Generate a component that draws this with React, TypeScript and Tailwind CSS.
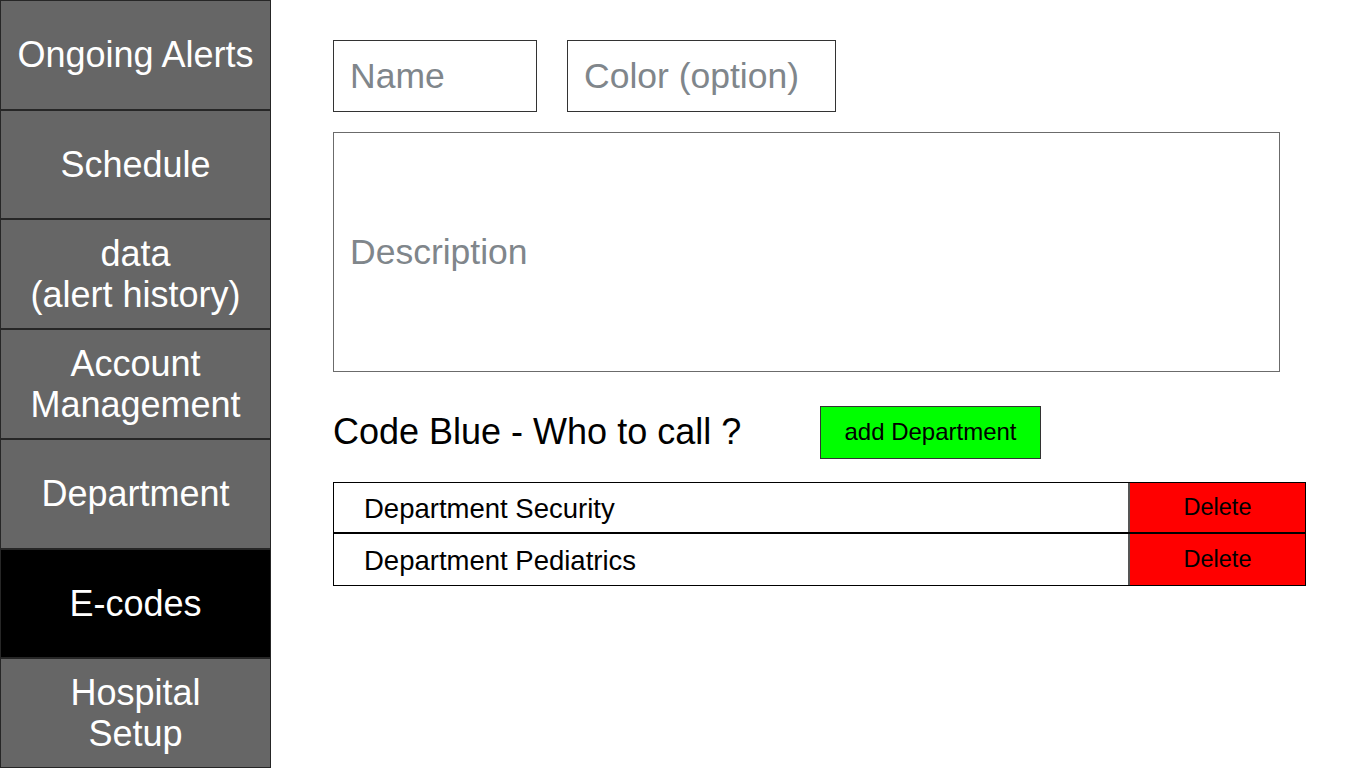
const navItems = [
  { label: ["Ongoing Alerts"] },
  { label: ["Schedule"] },
  { label: ["data", "(alert history)"] },
  { label: ["Account", "Management"] },
  { label: ["Department"] },
  { label: ["E-codes"], active: true },
  { label: ["Hospital", "Setup"] },
];

const departments = ["Department Security", "Department Pediatrics"];

function Sidebar() {
  return (
    <nav className="flex h-[768px] w-[271px] shrink-0 flex-col">
      {navItems.map((item) => (
        <div
          key={item.label.join(" ")}
          className={
            "flex flex-1 flex-col items-center justify-center border border-[#262626] text-[36px] leading-[41px] text-white " +
            (item.active ? "bg-black" : "bg-[#666666]")
          }
        >
          {item.label.map((line) => (
            <span key={line}>{line}</span>
          ))}
        </div>
      ))}
    </nav>
  );
}

export default function App() {
  return (
    <div
      className="flex h-[768px] w-[1366px] overflow-hidden bg-white"
      style={{ fontFamily: '"Liberation Sans", Arial, sans-serif' }}
    >
      <Sidebar />

      <main className="flex flex-1 flex-col pl-[62px] pt-[40px]">
        <div className="flex gap-[30px]">
          <input
            placeholder="Name"
            className="h-[72px] w-[204px] border border-[#333] px-[16px] text-[35.5px] outline-none placeholder:text-[#80868b]"
          />
          <input
            placeholder="Color (option)"
            className="h-[72px] w-[269px] border border-[#333] px-[16px] text-[35.5px] outline-none placeholder:text-[#80868b]"
          />
        </div>

        <input
          placeholder="Description"
          className="mt-[20px] h-[240px] w-[947px] border-[1.5px] border-[#6b6b6b] px-[16px] text-[35.5px] outline-none placeholder:text-[#80868b]"
        />

        <div className="mt-[33px] flex items-center">
          <h2 className="w-[487px] text-[36px] text-black">Code Blue - Who to call ?</h2>
          <button className="h-[53px] w-[221px] border border-[#333] bg-[#00ff00] text-[24px] text-black">
            add Department
          </button>
        </div>

        <div className="mt-[23px] w-[973px]">
          {departments.map((dep, i) => (
            <div
              key={dep}
              className={
                "flex h-[52px] border-x border-black " +
                (i === 0 ? "border-y border-b-2" : "border-b")
              }
            >
              <div className="flex flex-1 items-center border-r-2 border-[#555] pl-[30px] pt-[3px] text-[27.5px] text-black">
                {dep}
              </div>
              <button className="w-[175px] bg-[#ff0000] pt-[1px] text-[23.5px] text-black">Delete</button>
            </div>
          ))}
        </div>
      </main>
    </div>
  );
}
